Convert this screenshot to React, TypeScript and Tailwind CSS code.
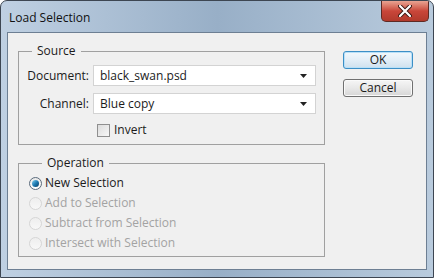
import React from 'react';

const font = { fontFamily: '"Open Sans", "DejaVu Sans", sans-serif' };

const Select = ({ value }: { value: string }) => (
  <div className="w-[223px] h-[21px] bg-white border border-[#d3d3d3] flex items-center justify-between pl-[6px] pr-[8px] text-[12px] text-[#1b1b1b]">
    <span>{value}</span>
    <svg width="7" height="4" viewBox="0 0 7 4">
      <path d="M0 0H7L3.5 4Z" fill="#222" />
    </svg>
  </div>
);

const Radio = ({ label, checked }: { label: string; checked?: boolean }) => (
  <div className={`flex items-center h-[20px] gap-[3px] ${checked ? 'text-[#1b1b1b]' : 'text-[#a3a3a3]'}`}>
    <div
      className={`w-[13px] h-[13px] rounded-full border flex items-center justify-center ${
        checked ? 'border-[#5b6b7c] bg-gradient-to-b from-[#e8e8e8] to-[#ffffff]' : 'border-[#d6d6d6] bg-gradient-to-b from-[#eeeeee] to-[#f8f8f8]'
      }`}
    >
      {checked && <div className="w-[7px] h-[7px] rounded-full bg-gradient-to-br from-[#7fd3f0] via-[#1e7cb3] to-[#0a3f66]" />}
    </div>
    <span className="text-[12px]">{label}</span>
  </div>
);

export default function App() {
  return (
    <div
      className="w-[434px] h-[278px] flex flex-col bg-gradient-to-r from-[#bfd0e2] via-[#98afc7] to-[#b9cbdd] border border-[#3d4652] rounded-t-[7px] overflow-hidden"
      style={font}
    >
      <div className="h-[31px] flex justify-between shrink-0">
        <span className="pl-[8px] pt-[8px] text-[12px] text-[#111]">Load Selection</span>
        <div className="mr-[4px] w-[48px] h-[21px] rounded-b-[5px] border border-t-0 border-[#5e2a24] bg-gradient-to-b from-[#e8a392] via-[#c9463a] to-[#b13a2c] flex items-center justify-center">
          <svg width="14" height="12" viewBox="0 0 14 12">
            <path d="M2 1L12 11M12 1L2 11" stroke="#3b1712" strokeWidth="4" strokeLinecap="round" />
            <path d="M2 1L12 11M12 1L2 11" stroke="#fff" strokeWidth="2.2" strokeLinecap="round" />
          </svg>
        </div>
      </div>
      <div className="flex-1 mx-[6px] mb-[7px] bg-[#f0f0f0] border border-[#6d7f93] flex pt-[11px] pl-[10px] text-[#1b1b1b]">
        <div className="flex flex-col gap-[11px]">
          <fieldset className="w-[307px] h-[101px] border border-[#a0a0a0] px-[0px]">
            <legend className="ml-[13px] px-[5px] text-[12px] leading-[14px]">Source</legend>
            <div className="flex flex-col gap-[7px] pt-[7px]">
              <div className="flex items-center gap-[4px]">
                <span className="w-[70px] text-right text-[12px]">Document:</span>
                <Select value="black_swan.psd" />
              </div>
              <div className="flex items-center gap-[4px]">
                <span className="w-[70px] text-right text-[12px]">Channel:</span>
                <Select value="Blue copy" />
              </div>
              <div className="flex items-center gap-[4px] pl-[78px]">
                <div className="w-[13px] h-[13px] border border-[#8f8f8f] bg-gradient-to-br from-[#dcdcdc] to-[#f7f7f7]" />
                <span className="text-[12px]">Invert</span>
              </div>
            </div>
          </fieldset>
          <fieldset className="w-[307px] h-[101px] border border-[#a0a0a0] pl-[10px]">
            <legend className="ml-[13px] px-[5px] text-[12px] leading-[14px]">Operation</legend>
            <div className="flex flex-col pt-[3px]">
              <Radio label="New Selection" checked />
              <Radio label="Add to Selection" />
              <Radio label="Subtract from Selection" />
              <Radio label="Intersect with Selection" />
            </div>
          </fieldset>
        </div>
        <div className="flex flex-col gap-[10px] ml-[18px] pt-[7px]">
          <button className="w-[70px] h-[18px] rounded-[3px] border border-[#3c8fc6] bg-gradient-to-b from-[#f2f8fc] via-[#e3eef7] to-[#cfe1ee] text-[12px] leading-none shadow-[inset_0_0_0_1px_#b9e0f8]">
            OK
          </button>
          <button className="w-[70px] h-[18px] rounded-[3px] border border-[#707070] bg-gradient-to-b from-[#f6f6f6] via-[#e8e8e8] to-[#d6d6d6] text-[12px] leading-none shadow-[inset_0_0_0_1px_#fafafa]">
            Cancel
          </button>
        </div>
      </div>
    </div>
  );
}
